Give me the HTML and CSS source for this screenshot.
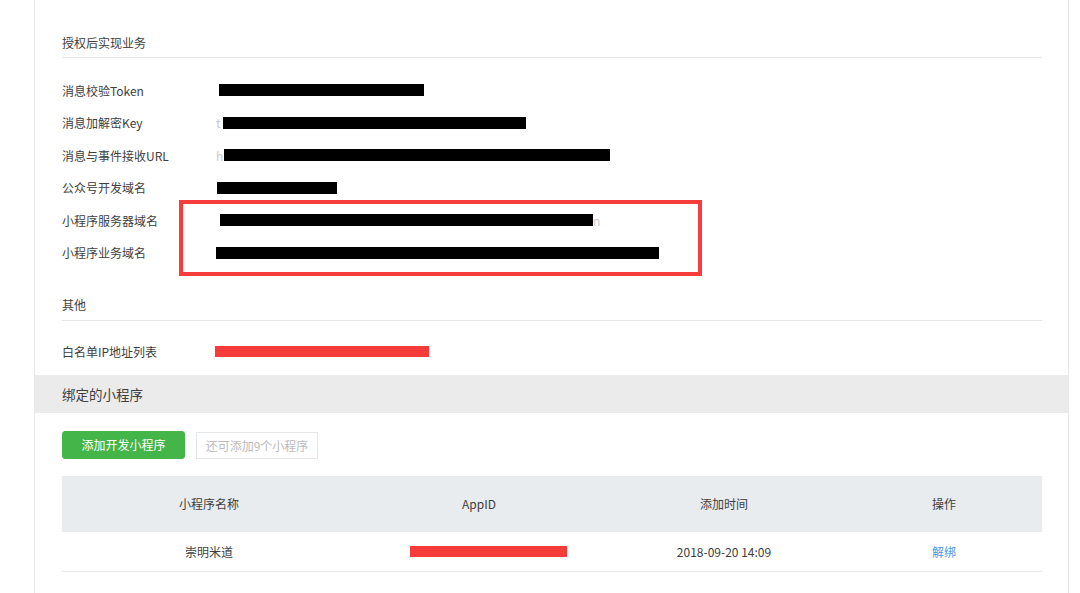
FILE: index.html
```html
<!DOCTYPE html>
<html lang="zh">
<head>
    <meta charset="UTF-8">
    <meta name="viewport" content="width=device-width, initial-scale=1.0">
    <title>开发配置</title>
    <link rel="stylesheet" href="styles.css">
</head>
<body>
    <div class="page">
        <div class="section">
            <div class="section-title first">授权后实现业务</div>
            <div class="info-list">
                <div class="info-row">
                    <span class="label">消息校验Token</span>
                    <span class="value"><i class="mask" style="margin-left:3px;width:205px"></i></span>
                </div>
                <div class="info-row">
                    <span class="label">消息加解密Key</span>
                    <span class="value"><span class="ghost">t</span><i class="mask" style="margin-left:2px;width:303px"></i></span>
                </div>
                <div class="info-row">
                    <span class="label">消息与事件接收URL</span>
                    <span class="value"><span class="ghost">h</span><i class="mask" style="margin-left:1px;width:386px"></i></span>
                </div>
                <div class="info-row">
                    <span class="label">公众号开发域名</span>
                    <span class="value"><i class="mask" style="margin-left:1px;width:120px"></i></span>
                </div>
                <div class="highlight">
                    <div class="info-row">
                        <span class="label">小程序服务器域名</span>
                        <span class="value"><i class="mask" style="margin-left:4px;width:373px"></i><span class="ghost">n</span></span>
                    </div>
                    <div class="info-row">
                        <span class="label">小程序业务域名</span>
                        <span class="value"><i class="mask" style="width:443px"></i></span>
                    </div>
                </div>
            </div>

            <div class="section-title">其他</div>
            <div class="info-list last">
                <div class="info-row">
                    <span class="label">白名单IP地址列表</span>
                    <span class="value"><i class="mask red" style="margin-left:-1px;width:214px"></i></span>
                </div>
            </div>
        </div>

        <div class="band">绑定的小程序</div>

        <div class="section">
            <div class="actions">
                <button class="btn btn-primary">添加开发小程序</button>
                <button class="btn btn-disabled" disabled>还可添加9个小程序</button>
            </div>
            <table class="table">
                <thead>
                    <tr>
                        <th class="col-name">小程序名称</th>
                        <th class="col-appid">AppID</th>
                        <th class="col-time">添加时间</th>
                        <th class="col-op">操作</th>
                    </tr>
                </thead>
                <tbody>
                    <tr>
                        <td>崇明米道</td>
                        <td><i class="mask red" style="width:157px;margin-left:19px"></i></td>
                        <td>2018-09-20 14:09</td>
                        <td><a class="link" href="#">解绑</a></td>
                    </tr>
                </tbody>
            </table>
        </div>
    </div>
</body>
</html>
```

FILE: styles.css
```css
body {
    margin: 0;
    background: #fff;
    font-family: "Noto Sans CJK SC", "Noto Sans", sans-serif;
    font-size: 12px;
    color: #3e3e3e;
}
.page {
    margin-left: 34px;
    width: 1033px;
    min-height: 593px;
    border-left: 1px solid #e7e7e7;
    border-right: 1px solid #e7e7e7;
}
.section {
    padding: 0 26px 0 27px;
}
.section-title {
    padding-top: 21px;
    padding-bottom: 5px;
    line-height: 20px;
    border-bottom: 1px solid #e7e7e7;
}
.section-title.first {
    padding-top: 33px;
    padding-bottom: 4px;
}
.info-list {
    padding-top: 16px;
    padding-bottom: 5px;
}
.info-list.last {
    padding-top: 14px;
    padding-bottom: 7px;
}
.info-row {
    display: flex;
    align-items: center;
    height: 32.5px;
}
.label {
    width: 154px;
    flex-shrink: 0;
}
.value {
    display: flex;
    align-items: center;
}
.mask {
    display: inline-block;
    height: 12px;
    background: #000;
}
.mask.red {
    height: 11px;
    background: #f63b3b;
}
.ghost {
    color: #c8c8c8;
}
.highlight {
    position: relative;
}
.highlight::after {
    content: "";
    position: absolute;
    left: 117px;
    top: -4px;
    width: 523px;
    height: 76px;
    border: 4px solid #f63c3c;
    box-sizing: border-box;
}
.band {
    background: #ebebeb;
    height: 38px;
    line-height: 38px;
    padding-left: 27px;
    font-size: 13.5px;
}
.actions {
    display: flex;
    align-items: flex-start;
    gap: 11px;
    padding-top: 18px;
}
.btn {
    height: 28px;
    padding: 0;
    border-radius: 3px;
    font-family: inherit;
    font-size: 12px;
    white-space: nowrap;
    cursor: pointer;
}
.btn-primary {
    width: 123px;
    background: #44b549;
    border: 1px solid #44b549;
    color: #fff;
}
.btn-disabled {
    width: 122px;
    margin-top: 1px;
    height: 27px;
    background: #fff;
    border: 1px solid #e4e8eb;
    border-radius: 0;
    color: #bbb;
}
.table {
    width: 980px;
    margin-top: 17px;
    border-collapse: collapse;
    table-layout: fixed;
}
.table th,
.table td {
    padding: 0;
    text-align: center;
}
.table th {
    height: 56px;
    background: #e9ecef;
    font-weight: normal;
}
.table td {
    height: 39px;
    border-bottom: 1px solid #e7e7e7;
}
.col-name {
    width: 294px;
}
.col-appid {
    width: 246px;
}
.col-time {
    width: 244px;
}
.col-op {
    width: 196px;
}
.link {
    color: #459ae9;
    text-decoration: none;
}
```
